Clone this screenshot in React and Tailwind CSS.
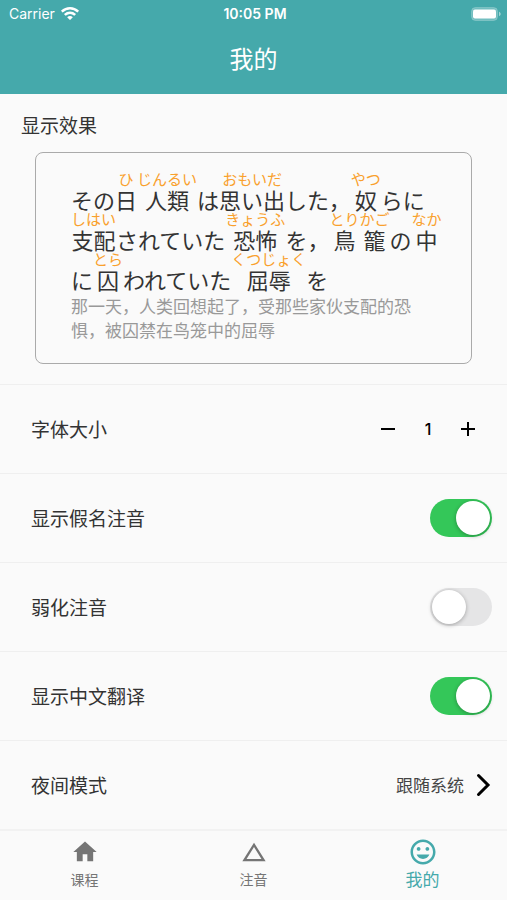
import { useState } from "react";
import { MdChangeHistory, MdHome, MdInsertEmoticon } from "react-icons/md";

const SENTENCE = [
  { text: "その" },
  { text: "日", kana: "ひ" },
  { text: "人類", kana: "じんるい" },
  { text: "は" },
  { text: "思い出", kana: "おもいだ" },
  { text: "した，" },
  { text: "奴", kana: "やつ" },
  { text: "らに" },
  { text: "支配", kana: "しはい" },
  { text: "されていた" },
  { text: "恐怖", kana: "きょうふ" },
  { text: "を，" },
  { text: "鳥", kana: "とり" },
  { text: "籠", kana: "かご" },
  { text: "の" },
  { text: "中", kana: "なか" },
  { text: "に" },
  { text: "囚", kana: "とら" },
  { text: "われていた" },
  { text: "屈辱", kana: "くつじょく" },
  { text: "を" },
];

const TABS = [
  { label: "课程", Icon: MdHome },
  { label: "注音", Icon: MdChangeHistory },
  { label: "我的", Icon: MdInsertEmoticon, active: true },
];

function StatusBar() {
  return (
    <div className="grid h-7 grid-cols-3 items-center pr-[6px] pl-[9px] font-['Inter','Noto_Sans_CJK_SC',sans-serif] text-sm">
      <div className="flex items-center gap-[6px]">
        <span>Carrier</span>
        <svg viewBox="0 0 18 14" className="h-[14px] w-[18px]" fill="currentColor" aria-hidden="true">
          <path d="M9 0C5.600 0 2.500 1.300.2 3.500a.4.4 0 0 0 0 .6l1.200 1.200a.4.4 0 0 0 .6 0A10 10 0 0 1 9 2.500a10 10 0 0 1 7 2.800.4.4 0 0 0 .6 0l1.200-1.200a.4.4 0 0 0 0-.6A12.700 12.700 0 0 0 9 0Z" />
          <path d="M9 4.500a8.200 8.200 0 0 0-5.700 2.300.4.4 0 0 0 0 .6l1.200 1.200a.4.4 0 0 0 .6 0 5.700 5.700 0 0 1 7.800 0 .4.4 0 0 0 .6 0l1.200-1.200a.4.4 0 0 0 0-.6A8.200 8.200 0 0 0 9 4.500Z" />
          <path d="M9 8.900c-1 0-1.900.4-2.600 1a.4.4 0 0 0 0 .6l2.300 2.300a.4.4 0 0 0 .6 0l2.300-2.300a.4.4 0 0 0 0-.6c-.7-.6-1.600-1-2.600-1Z" />
        </svg>
      </div>
      <span className="text-center font-semibold">10:05 PM</span>
      <svg viewBox="0 0 30 14" className="h-[14px] w-[30px] justify-self-end" aria-hidden="true">
        <rect x="0.5" y="0.5" width="26" height="13" rx="4" fill="#fff" fillOpacity="0.25" stroke="#fff" strokeOpacity="0.2" />
        <rect x="2" y="2.500" width="23" height="9" rx="2" fill="#fff" />
        <path d="M28 4.800c1 .4 1.700 1.200 1.700 2.200S29 8.800 28 9.200Z" fill="#fff" fillOpacity="0.5" />
      </svg>
    </div>
  );
}

function Row({ children }) {
  return (
    <div className="flex h-[89px] items-center justify-between border-t border-[#efefef] pr-[15px] pl-[31px] text-[19px]">
      {children}
    </div>
  );
}

function SwitchRow({ id, label, initial }) {
  const [on, setOn] = useState(initial);
  return (
    <Row>
      <label htmlFor={id}>{label}</label>
      <input
        id={id}
        type="checkbox"
        role="switch"
        checked={on}
        onChange={(e) => setOn(e.target.checked)}
        className="h-[38px] w-[62px] cursor-pointer appearance-none rounded-full bg-[#e5e5e6] p-[2px] transition-colors before:block before:size-[34px] before:rounded-full before:bg-white before:shadow-[0_1px_4px_rgba(0,0,0,0.3)] before:transition-transform before:content-[''] checked:bg-[#34c759] checked:before:translate-x-6"
      />
    </Row>
  );
}

function FontSizeRow() {
  const [size, setSize] = useState(1);
  return (
    <Row>
      <span>字体大小</span>
      <div className="flex items-center pr-1 text-black">
        <button type="button" aria-label="减小" onClick={() => setSize(Math.max(1, size - 1))} className="grid size-10 place-items-center">
          <svg viewBox="0 0 16 16" className="size-4" stroke="currentColor" strokeWidth="2" aria-hidden="true">
            <path d="M1 8h14" />
          </svg>
        </button>
        <output className="w-10 text-center font-['Inter',sans-serif] text-base font-medium">{size}</output>
        <button type="button" aria-label="增大" onClick={() => setSize(size + 1)} className="grid size-10 place-items-center">
          <svg viewBox="0 0 16 16" className="size-4" stroke="currentColor" strokeWidth="2" aria-hidden="true">
            <path d="M1 8h14M8 1v14" />
          </svg>
        </button>
      </div>
    </Row>
  );
}

export default function App() {
  return (
    <div className="flex min-h-screen flex-col bg-[#fafafa] font-['Noto_Sans_CJK_SC',sans-serif] text-[#333]">
      <header className="bg-[#45a9ab] text-white">
        <StatusBar />
        <h1 className="pt-3 pb-[18px] text-center text-2xl leading-9">我的</h1>
      </header>

      <main>
        <section className="px-[35px] pt-4 pb-5">
          <h2 className="-ml-[14px] text-[19px] leading-[30px]">显示效果</h2>
          <div className="mt-3 rounded-lg border border-[#aaa] pt-[18px] pr-5 pb-[21px] pl-[35px]">
            <p lang="ja" className="flex flex-wrap items-end font-['Noto_Sans_CJK_JP',sans-serif] text-[22px] leading-6">
              {SENTENCE.map(({ text, kana }, i) =>
                kana ? (
                  <ruby key={i} className="flex flex-col-reverse items-center">
                    <span>{text}</span>
                    <rt className="block text-[15px] leading-4 text-[#f9a02c]">{kana}</rt>
                  </ruby>
                ) : (
                  <span key={i} className="pt-4">{text}</span>
                )
              )}
            </p>
            <p className="mt-[3px] pr-8 text-[17px] leading-6 text-[#999]">
              那一天，人类回想起了，受那些家伙支配的恐惧，被囚禁在鸟笼中的屈辱
            </p>
          </div>
        </section>

        <FontSizeRow />
        <SwitchRow id="kana" label="显示假名注音" initial={true} />
        <SwitchRow id="weak" label="弱化注音" initial={false} />
        <SwitchRow id="translation" label="显示中文翻译" initial={true} />
        <Row>
          <span id="night">夜间模式</span>
          <button type="button" aria-describedby="night" className="flex items-center gap-3 text-[17px] text-[#444]">
            跟随系统
            <svg viewBox="0 0 16 24" className="h-6 w-4" fill="none" stroke="#000" strokeWidth="3" strokeLinecap="round" aria-hidden="true">
              <path d="M2.500 2.500 12 12 2.500 21.500" />
            </svg>
          </button>
        </Row>
      </main>

      <nav className="mt-auto grid h-[71px] grid-cols-3 border-t-2 border-[#f2f2f2]">
        {TABS.map(({ label, Icon, active }) => (
          <a
            key={label}
            href="#"
            aria-current={active ? "page" : undefined}
            className={
              active
                ? "flex flex-col items-center pt-[6px] text-[17px] leading-6 text-[#45a9ab]"
                : "flex flex-col items-center pt-[6px] text-sm leading-6 text-[#757575]"
            }
          >
            <span className="grid h-[30px] place-items-center">
              <Icon className={active ? "size-[30px]" : "size-7"} />
            </span>
            {label}
          </a>
        ))}
      </nav>
    </div>
  );
}
